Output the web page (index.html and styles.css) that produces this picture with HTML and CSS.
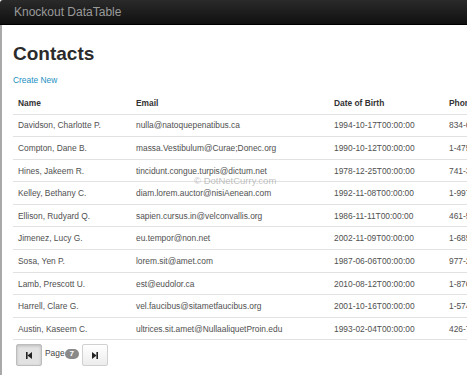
FILE: index.html
```html
<!DOCTYPE html>
<html lang="en">
<head>
  <meta charset="UTF-8">
  <title>Knockout DataTable</title>
  <link rel="stylesheet" href="styles.css">
</head>
<body>

  <div class="navbar">
    <span class="brand">Knockout DataTable</span>
  </div>

  <div class="page">
    <div class="container">
      <h2>Contacts</h2>
      <p><a href="#">Create New</a></p>

      <table class="table">
        <colgroup>
          <col class="c-name">
          <col class="c-email">
          <col class="c-dob">
          <col class="c-phone">
        </colgroup>
        <thead>
          <tr>
            <th>Name</th>
            <th>Email</th>
            <th>Date of Birth</th>
            <th>Phone</th>
          </tr>
        </thead>
        <tbody>
          <tr><td>Davidson, Charlotte P.</td><td>nulla@natoquepenatibus.ca</td><td>1994-10-17T00:00:00</td><td>834-6124</td></tr>
          <tr><td>Compton, Dane B.</td><td>massa.Vestibulum@Curae;Donec.org</td><td>1990-10-12T00:00:00</td><td>1-475-6621</td></tr>
          <tr><td>Hines, Jakeem R.</td><td>tincidunt.congue.turpis@dictum.net</td><td>1978-12-25T00:00:00</td><td>741-3320</td></tr>
          <tr><td>Kelley, Bethany C.</td><td>diam.lorem.auctor@nisiAenean.com</td><td>1992-11-08T00:00:00</td><td>1-997-4410</td></tr>
          <tr><td>Ellison, Rudyard Q.</td><td>sapien.cursus.in@velconvallis.org</td><td>1986-11-11T00:00:00</td><td>461-5530</td></tr>
          <tr><td>Jimenez, Lucy G.</td><td>eu.tempor@non.net</td><td>2002-11-09T00:00:00</td><td>1-685-2201</td></tr>
          <tr><td>Sosa, Yen P.</td><td>lorem.sit@amet.com</td><td>1987-06-06T00:00:00</td><td>977-2318</td></tr>
          <tr><td>Lamb, Prescott U.</td><td>est@eudolor.ca</td><td>2010-08-12T00:00:00</td><td>1-876-5512</td></tr>
          <tr><td>Harrell, Clare G.</td><td>vel.faucibus@sitametfaucibus.org</td><td>2001-10-16T00:00:00</td><td>1-574-9902</td></tr>
          <tr><td>Austin, Kaseem C.</td><td>ultrices.sit.amet@NullaaliquetProin.edu</td><td>1993-02-04T00:00:00</td><td>426-7713</td></tr>
        </tbody>
      </table>

      <div class="pager">
        <button class="btn active" type="button">
          <svg width="6" height="7" viewBox="0 0 6 7"><rect x="0" y="0" width="1.6" height="7" fill="#222"/><polygon points="6,0 6,7 1.4,3.5" fill="#222"/></svg>
        </button>
        <span class="page-label">Page<span class="badge">7</span></span>
        <button class="btn" type="button">
          <svg width="6" height="7" viewBox="0 0 6 7"><polygon points="0,0 0,7 4.6,3.5" fill="#222"/><rect x="4.4" y="0" width="1.6" height="7" fill="#222"/></svg>
        </button>
      </div>
    </div>

    <span class="watermark">&copy; DotNetCurry.com</span>
  </div>

</body>
</html>
```

FILE: styles.css
```css
body {
  font-family: "Liberation Sans", Arial, sans-serif;
  font-size: 8.4px;
  line-height: 12px;
  color: #333;
  background: white;
  margin: 0;
  padding: 0;
}

.navbar {
  height: 25px;
  background: linear-gradient(#2a2a2a, #101010);
  border-bottom: 1px solid #000;
  border-top-left-radius: 3px;
  box-sizing: border-box;
}

.brand {
  display: block;
  padding-left: 14px;
  font-size: 12px;
  line-height: 24px;
  color: #9a9a9a;
}

.page {
  position: relative;
  border-left: 2px solid #a9a9a9;
  min-height: 350px;
}

.container {
  padding: 17px 0 0 11px;
  width: 564px;
}

h2 {
  font-size: 19px;
  line-height: 24px;
  margin: 0 0 8px;
  color: #2b2b2b;
}

p {
  margin: 0 0 6px;
}

a {
  color: #1a8fc2;
  text-decoration: none;
}

.table {
  width: 564px;
  table-layout: fixed;
  border-collapse: collapse;
  border-bottom: 1px solid #e2e2e2;
}

.c-name { width: 118px; }
.c-email { width: 198px; }
.c-dob { width: 115px; }
.c-phone { width: 133px; }

th, td {
  text-align: left;
  padding: 4.9px 5px 4.7px;
  white-space: nowrap;
  overflow: hidden;
}

th {
  font-weight: bold;
  color: #333;
}

td {
  color: #505050;
  border-top: 1px solid #e2e2e2;
}

.pager {
  display: flex;
  align-items: flex-start;
  padding: 4px 0 0 3px;
}

.btn {
  width: 26px;
  height: 22px;
  padding: 0;
  display: flex;
  align-items: center;
  justify-content: center;
  background: linear-gradient(#ffffff, #ececec);
  border: 1px solid #d0d0d0;
  border-radius: 2px;
}

.btn.active {
  background: #e2e2e2;
  border-color: #bdbdbd;
  box-shadow: inset 0 1px 3px rgba(0, 0, 0, 0.18);
}

.page-label {
  margin: 2px 0 0 3px;
  color: #444;
  display: flex;
  align-items: center;
}

.badge {
  display: inline-block;
  background: #8a8a8a;
  color: white;
  font-size: 8px;
  font-weight: bold;
  line-height: 10px;
  padding: 0 5px;
  border-radius: 5px;
  margin: 3px 3px 0 0;
}

.watermark {
  position: absolute;
  left: 192px;
  top: 150px;
  font-size: 9.5px;
  color: rgba(140, 140, 140, 0.55);
}
```
